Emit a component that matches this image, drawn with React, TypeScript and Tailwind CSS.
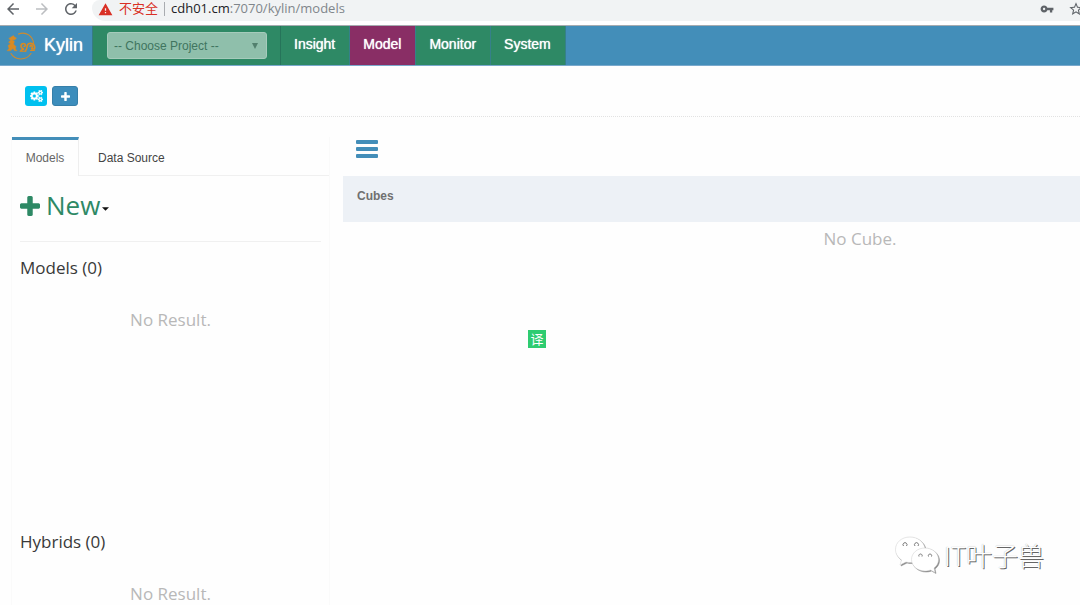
import type { ReactNode } from "react";
import { MdArrowBack, MdArrowForward, MdRefresh, MdVpnKey, MdStarBorder, MdWarning } from "react-icons/md";

function PlusIcon({ className }: { className: string }) {
  return (
    <svg viewBox="0 192 1408 1408" fill="currentColor" className={className} aria-hidden="true">
      <path d="M1408 800v192q0 40-28 68t-68 28h-416v416q0 40-28 68t-68 28h-192q-40 0-68-28t-28-68v-416h-416q-40 0-68-28t-28-68v-192q0-40 28-68t68-28h416v-416q0-40 28-68t68-28h192q40 0 68 28t28 68v416h416q40 0 68 28t28 68z" />
    </svg>
  );
}

function CogsIcon() {
  return (
    <svg viewBox="0 0 1920 1792" fill="currentColor" stroke="currentColor" strokeWidth="60" className="h-3 w-[13px]" aria-hidden="true">
      <path d="M896 896q0-106-75-181t-181-75-181 75-75 181 75 181 181 75 181-75 75-181zm768 512q0-52-38-90t-90-38-90 38-38 90q0 53 37.5 90.5t90.5 37.5 90.5-37.5 37.5-90.5zm0-1024q0-52-38-90t-90-38-90 38-38 90q0 53 37.5 90.5t90.5 37.5 90.5-37.5 37.5-90.5zm-384 421v185q0 10-7 19.5t-16 10.5l-155 24q-11 35-32 76 34 48 90 115 7 11 7 20 0 12-7 19-23 30-82.5 89.5t-78.5 59.5q-11 0-21-7l-115-90q-37 19-77 31-11 108-23 155-7 24-30 24h-186q-11 0-20-7.5t-10-17.5l-23-153q-34-10-75-31l-118 89q-7 7-20 7-11 0-21-8-144-133-144-160 0-9 7-19 10-14 41-53t47-61q-23-44-35-82l-152-24q-10-1-17-9.5t-7-19.5v-185q0-10 7-19.5t16-10.5l155-24q11-35 32-76-34-48-90-115-7-11-7-20 0-12 7-20 22-30 82-89t79-59q11 0 21 7l115 90q34-18 77-32 11-108 23-154 7-24 30-24h186q11 0 20 7.5t10 17.5l23 153q34 10 75 31l118-89q8-7 20-7 11 0 21 8 144 133 144 160 0 8-7 19-12 16-42 54t-45 60q23 48 34 82l152 23q10 2 17 10.5t7 19.5zm640 533v140q0 16-149 31-12 27-30 52 51 113 51 138 0 4-4 7-122 71-124 71-8 0-46-47t-52-68q-20 2-30 2t-30-2q-14 21-52 68t-46 47q-2 0-124-71-4-3-4-7 0-25 51-138-18-25-30-52-149-15-149-31v-140q0-16 149-31 13-29 30-52-51-113-51-138 0-4 4-7 4-2 35-20t59-34 30-16q8 0 46 46.5t52 67.5q20-2 30-2t30 2q51-71 92-112l6-2q4 0 124 70 4 3 4 7 0 25-51 138 17 23 30 52 149 15 149 31zm0-1024v140q0 16-149 31-12 27-30 52 51 113 51 138 0 4-4 7-122 71-124 71-8 0-46-47t-52-68q-20 2-30 2t-30-2q-14 21-52 68t-46 47q-2 0-124-71-4-3-4-7 0-25 51-138-18-25-30-52-149-15-149-31v-140q0-16 149-31 13-29 30-52-51-113-51-138 0-4 4-7 4-2 35-20t59-34 30-16q8 0 46 46.5t52 67.5q20-2 30-2t30 2q51-71 92-112l6-2q4 0 124 70 4 3 4 7 0 25-51 138 17 23 30 52 149 15 149 31z" />
    </svg>
  );
}

function KylinLogo() {
  return (
    <svg viewBox="0 0 30 28" className="h-7 w-[30px]" fill="none" stroke="#d08a2c" strokeLinecap="round" strokeLinejoin="round" aria-hidden="true">
      <path d="M12.500 2C20 -1 27 4 27.800 12M5 21.500C9 28.500 20 29 25 21.500" strokeWidth="1.100" />
      <path d="M5 5L7.500 3.500 8.500 5 10.500 6 9 7.800 6.500 8 8.500 9.500 7.500 12 10 14.500 9.500 17 11.200 18.800H8.500L7 16.500 4.500 18.800H1L3 16.500 2 13.500 4.500 12 2.500 10 4.500 8.500 3 6.500z" fill="#d98a23" strokeWidth=".4" />
      <path d="M15 18.500L17.500 17C14 16 14.500 11.500 17.500 11.500C20 11.500 19.800 14.500 18 14.500M19.500 18.500C22 17 20 12 23 11.500C27 11 29.500 13 28.500 17H25.500L26.500 15C26.500 13.500 24.500 13 24 14.500" strokeWidth="1.600" stroke="#d98a23" />
      <path d="M14 19.300H20M24.500 18.500H28.500" strokeWidth="1" stroke="#d98a23" />
    </svg>
  );
}

function WeChatIcon() {
  return (
    <svg viewBox="0 0 46 40" className="h-10 w-[46px] drop-shadow-[1px_1px_0_#888]" fill="#fff" stroke="#ccc" strokeWidth=".5" aria-hidden="true">
      <path d="M16 2C7.500 2 1.500 7.500 1.500 14.500c0 4.500 2.500 8 6 10.500L6 30l6-3c2 .5 5 .8 7 .3L31 13C29.500 6.500 23.500 2 16 2z" />
      <path d="M31 13C23.500 13 17.500 18 17.500 24.500S23.500 36 31 36c2 0 4-.3 5.500-1L41 37.500 40 33c2.800-2 4.500-5 4.500-8.500C44.500 18 38.500 13 31 13z" />
      <g fill="none" stroke="#777" strokeWidth="1">
        <path d="M9.500 11a2 2 0 1 1 3 0M21 11a2 2 0 1 1 3 0M25 21.500a1.700 1.700 0 1 1 3 0M34.500 21.500a1.700 1.700 0 1 1 3 0" />
      </g>
    </svg>
  );
}

function BrowserBar() {
  return (
    <div className="flex h-[26px] items-start border-b border-[#a6abb0] bg-white text-[#5f6368]">
      <div className="flex h-[18px] items-center gap-[11px] pr-3 pl-1">
        <button type="button" aria-label="Back"><MdArrowBack className="size-[18px]" /></button>
        <button type="button" aria-label="Forward" className="text-[#bcbec1]"><MdArrowForward className="size-[18px]" /></button>
        <button type="button" aria-label="Reload"><MdRefresh className="size-[18px]" /></button>
      </div>
      <div className="flex h-[21px] min-w-0 grow items-start rounded-tl-lg rounded-bl-[14px] bg-[#f1f3f4] pl-1.5">
        <div className="flex h-[18px] grow items-center font-['Open_Sans','Noto_Sans_CJK_SC',sans-serif] text-[13px]">
          <MdWarning className="size-[15px] text-[#d93025]" aria-hidden="true" />
          <span className="ml-1.5 text-[#d93025]">不安全</span>
          <span className="mx-1.5 h-3.5 w-px bg-[#a9acb0]" />
          <span className="text-[#80868b]"><span className="text-[#202124]">cdh01.cm</span>:7070/kylin/models</span>
        </div>
        <div className="flex h-[18px] items-center gap-3.5">
          <MdVpnKey className="size-3.5" aria-label="Passwords" />
          <button type="button" aria-label="Bookmark this page" className="-mr-1"><MdStarBorder className="size-4" /></button>
        </div>
      </div>
    </div>
  );
}

const sections = ["Insight", "Model", "Monitor", "System"];

function NavBar() {
  return (
    <header className="flex h-10 border-b border-[#79a9cd] bg-[#438eb9] text-white">
      <a href="#home" className="flex w-[93px] items-center gap-2 border-r border-[#367b85] pl-1.5 text-[18px] [text-shadow:0_0_1px_#fff]">
        <KylinLogo />
        <span>Kylin</span>
      </a>
      <div className="flex w-[188px] items-center border-r border-[#26745a] bg-[#2e8965] pl-3.5">
        <div className="relative w-40">
          <select aria-label="Project" className="block h-[27px] w-full appearance-none rounded-[3px] border border-[#a5cbbb] bg-[#8fbfab] pl-1.5 text-[12px] text-[#40755f]">
            <option>-- Choose Project --</option>
          </select>
          <svg viewBox="0 0 6 6" className="pointer-events-none absolute top-[11px] right-[9px] size-1.5" fill="#52806e" aria-hidden="true"><path d="M0 0h6L3 6z" /></svg>
        </div>
      </div>
      <nav className="flex text-[14px]">
        {sections.map((name) => (
          <a
            key={name}
            href={`#${name.toLowerCase()}`}
            className={`flex items-center border-r border-[#36808a] pr-3.5 pl-[13px] pb-0.5 [text-shadow:0_0_1px_#fff] ${name === "Model" ? "bg-[#892e65]" : "bg-[#2e8965]"}`}
          >
            {name}
          </a>
        ))}
      </nav>
    </header>
  );
}

function ListSection({ title, children }: { title: string; children: ReactNode }) {
  return (
    <section className="min-h-[274px] pl-2 font-['Open_Sans',sans-serif]">
      <h2 className="pt-3.5 text-[17px] leading-6 text-[#393939]">{title}</h2>
      <p className="mt-7 pr-2 text-center text-[17px] leading-6 text-[#b8b8b8]">{children}</p>
    </section>
  );
}

function Sidebar() {
  return (
    <aside className="w-[319px] shrink-0 border-x border-[#fafafa]">
      <div role="tablist" className="flex h-[39px] text-[12px]">
        <button role="tab" aria-selected="true" type="button" className="w-[67px] border-t-[3px] border-r border-t-[#438eb9] border-r-[#eee] text-[#666]">Models</button>
        <div className="flex grow border-b border-[#f0f0f0]">
          <button role="tab" aria-selected="false" type="button" className="px-[19px] pt-1 text-[#444]">Data Source</button>
        </div>
      </div>
      <div className="px-2">
        <button type="button" className="flex h-[66px] w-full items-center border-b border-[#f0f0f0] pb-1.5 font-['Open_Sans',sans-serif] text-[26px] text-[#2e8965]">
          <PlusIcon className="mr-1.5 size-5" />
          New
          <svg viewBox="0 0 8 4" className="mt-1.5 ml-0.5 h-1 w-[7px]" fill="#111" aria-hidden="true"><path d="M0 0h8L4 4z" /></svg>
        </button>
      </div>
      <ListSection title="Models (0)">No Result.</ListSection>
      <ListSection title="Hybrids (0)">No Result.</ListSection>
    </aside>
  );
}

function CubePanel() {
  return (
    <main className="min-w-0 grow overflow-hidden">
      <div className="flex h-[39px] items-start pt-[3px] pl-[13px]">
        <button type="button" aria-label="Toggle sidebar" className="flex flex-col gap-[3px]">
          <span className="h-1 w-[22px] rounded-[1px] bg-[#438eb9]" />
          <span className="h-1 w-[22px] rounded-[1px] bg-[#438eb9]" />
          <span className="h-1 w-[22px] rounded-[1px] bg-[#438eb9]" />
        </button>
      </div>
      <table className="w-[1034px]">
        <thead>
          <tr className="h-[46px] bg-[#edf1f6] text-left align-top text-[12px] text-[#707070]">
            <th className="pt-[11px] pl-3.5 font-bold">Cubes</th>
          </tr>
        </thead>
        <tbody>
          <tr>
            <td className="pt-[5px] text-center font-['Open_Sans',sans-serif] text-[17px] leading-6 text-[#b8b8b8]">No Cube.</td>
          </tr>
        </tbody>
      </table>
    </main>
  );
}

export default function App() {
  return (
    <div className="relative h-screen overflow-hidden bg-[#fefefe] font-['Liberation_Sans',Arial,sans-serif]">
      <BrowserBar />
      <NavBar />
      <div className="ml-[11px] flex h-[51px] items-center gap-[5px] border-b border-dotted border-[#e2e2e2] pt-2.5 pl-3.5 text-white">
        <button type="button" aria-label="Manage project" className="flex h-5 w-[22px] items-center justify-center rounded-[3px] bg-[#00c0ef]"><CogsIcon /></button>
        <button type="button" aria-label="Add project" className="flex h-5 w-[26px] items-center justify-center rounded-[3px] border border-[#367fa9] bg-[#3c8dbc]"><PlusIcon className="size-[9px]" /></button>
      </div>
      <div className="mt-5 ml-[11px] flex gap-[13px]">
        <Sidebar />
        <CubePanel />
      </div>
      <button type="button" className="absolute top-[330px] left-[528px] size-[18px] bg-[#2ecc71] font-['Noto_Sans_CJK_SC',sans-serif] text-[13px] leading-[18px] text-white">译</button>
      <div className="absolute right-9 bottom-[30px] flex items-center gap-1">
        <WeChatIcon />
        <span className="font-['Noto_Sans_CJK_SC',sans-serif] text-[26px] leading-10 font-light text-white [text-shadow:1px_1px_0_#666,0_0_1px_#aaa]">IT叶子兽</span>
      </div>
    </div>
  );
}
